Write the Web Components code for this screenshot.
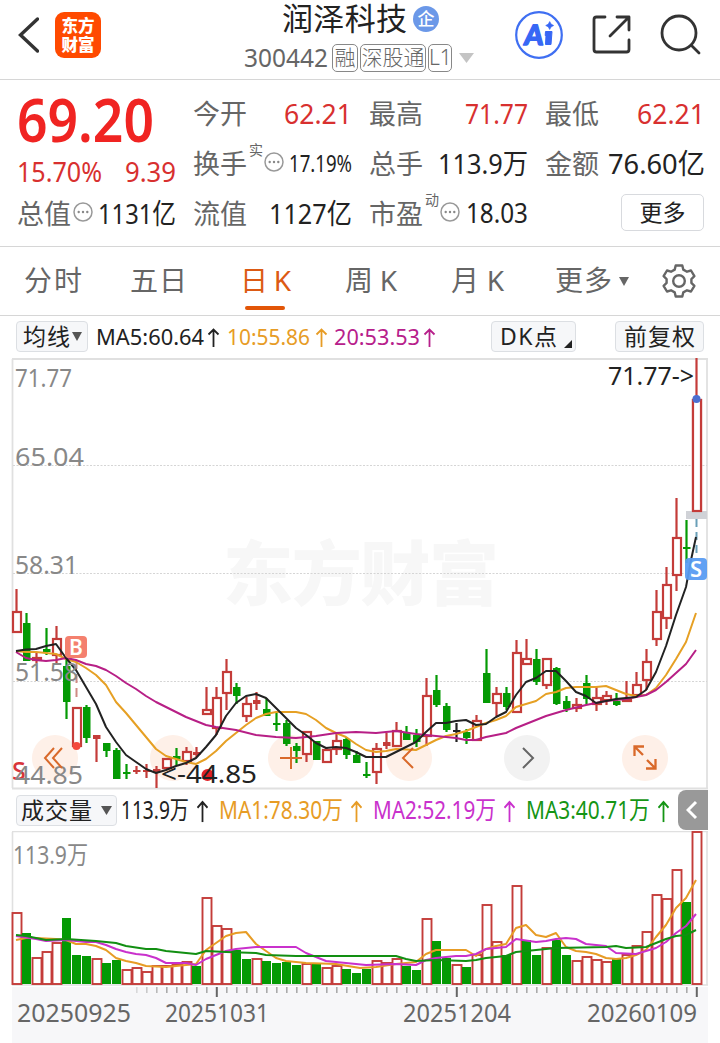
<!DOCTYPE html>
<html lang="zh-CN">
<head>
<meta charset="utf-8">
<title>润泽科技 300442</title>
<style>
  body {
    margin: 0;
    width: 720px;
    height: 1043px;
    overflow: hidden;
    background: #fff;
    color: #222;
    font-family: "Noto Sans", "Noto Sans CJK SC", sans-serif;
  }
</style>
</head>
<body>
<stock-page></stock-page>

<script>
function define(name, html, setup) {
  const template = document.createElement('template');
  template.innerHTML = html;
  customElements.define(name, class extends HTMLElement {
    constructor() {
      super();
      this.attachShadow({ mode: 'open' });
      this.shadowRoot.appendChild(template.content.cloneNode(true));
    }

    connectedCallback() {
      if (setup && !this.ready) {
        this.ready = true;
        setup.call(this, this.shadowRoot);
      }
    }
  });
}

// text set to the width in its "w" attribute: tracked out when short, condensed when long
define('fit-text', `
  <style>
    :host { display: inline-block; white-space: nowrap; flex: none; }
    span { display: inline-block; transform-origin: 0 50%; }
  </style>
  <span><slot></slot></span>
`, function (root) {
  const span = root.querySelector('span');
  const w = Number(this.getAttribute('w'));
  const natural = span.getBoundingClientRect().width;
  const gaps = this.textContent.length - 1;
  this.style.width = w + 'px';
  if (natural > w) {
    span.style.transform = `scaleX(${w / natural})`;
  } else if (gaps > 0) {
    span.style.letterSpacing = (w - natural) / gaps + 'px';
  }
});

define('info-dot', `
  <style>
    :host { display: block; width: 20px; height: 20px; flex: none; }
    svg { display: block; }
  </style>
  <svg width="20" height="20" viewBox="0 0 20 20">
    <circle cx="10" cy="10" r="9" fill="none" stroke="#999" stroke-width="1.5"/>
    <g fill="#888"><circle cx="5.7" cy="10" r="1.2"/><circle cx="10" cy="10" r="1.2"/><circle cx="14.3" cy="10" r="1.2"/></g>
  </svg>
`);

define('up-arrow', `
  <style>
    :host { display: block; width: 13px; height: 19px; flex: none; }
    svg { display: block; }
  </style>
  <svg width="13" height="19" viewBox="0 0 13 19" fill="none" stroke="currentColor" stroke-width="1.8">
    <path d="M6.5 19V1.5M1.5 6.5l5-5 5 5"/>
  </svg>
`);

define('soft-chip', `
  <style>
    :host {
      display: flex;
      align-items: center;
      box-sizing: border-box;
      height: 31px;
      border: 1px solid #dcdfe3;
      border-radius: 4px;
      background: #f6f7f9;
      font-size: 23px;
      flex: none;
      line-height: 29px;
    }
  </style>
  <slot></slot>
`);

define('app-header', `
  <style>
    :host { display: flex; height: 79px; border-bottom: 1px solid #d6d6d6; }
    svg { display: block; flex: none; }
    .back { margin: 15px 0 0 17px; }
    .logo {
      width: 46px; height: 46px; margin: 12px 0 0 16px; box-sizing: border-box; padding-top: 4px;
      border-radius: 9px; background: #ff4a00; color: #fff;
      font-size: 16.5px; font-weight: 900; line-height: 19px; text-align: center; flex: none;
    }
    .middle { width: 240px; margin-left: 142px; }
    .title { display: flex; height: 40px; padding-left: 39px; line-height: 37px; font-size: 31px; }
    .title b {
      width: 26px; height: 26px; margin: 6px 0 0 6px; border-radius: 50%; background: #6b98e8;
      color: #fff; font-size: 17px; font-weight: 500; line-height: 25px; text-align: center;
    }
    .code { display: flex; height: 36px; padding-left: 1px; color: #666; font-size: 25px; line-height: 34px; }
    .tag {
      box-sizing: border-box; height: 28px; margin: 4px 2px 0 0; border: 1.5px solid #888; border-radius: 5px;
      font-size: 21px; line-height: 24px; text-align: center; flex: none; font-weight: 300;
    }
    .code .num { margin-right: 4px; }
    .drop { margin: 13px 0 0 5px; }
    .ai { margin: 11px 0 0 32px; }
    .share { margin: 14px 0 0 27px; }
    .search { margin: 14px 0 0 27px; }
  </style>
  <svg class="back" width="22" height="40" fill="none" stroke="#333" stroke-width="3.4" stroke-linecap="round"><path d="M20.5 4L3.500 20 20.500 36"/></svg>
  <div class="logo">东方<br>财富</div>
  <div class="middle">
    <div class="title"><fit-text w="125">润泽科技</fit-text><b>企</b></div>
    <div class="code">
      <fit-text class="num" w="84">300442</fit-text>
      <span class="tag" style="width:26px">融</span>
      <span class="tag" style="width:66px">深股通</span>
      <span class="tag" style="width:24px">L1</span>
      <svg class="drop" width="15" height="10"><path d="M0 0h15L7.500 10z" fill="#c4c4c4"/></svg>
    </div>
  </div>
  <svg class="ai" width="48" height="48" viewBox="0 0 48 48">
    <circle cx="24" cy="24" r="22.8" fill="#fff" stroke="#3f6ff2" stroke-width="2.2"/>
    <text transform="translate(8.500 33.500) skewX(-6)" font-family="Lato, sans-serif" font-size="28" font-weight="900" fill="#3767f5" stroke="#3767f5" stroke-width="1.4" stroke-linejoin="round" textLength="19" lengthAdjust="spacingAndGlyphs">A</text>
    <path d="M30.500 20.500H37L36 33.500H30.500L31 24.500H30.200z" fill="#3767f5" stroke="#3767f5" stroke-linejoin="round"/>
    <path d="M34.700 10.500q.8 3.200 4 4-3.200.8-4 4-.8-3.200-4-4 3.200-.8 4-4z" fill="#3767f5" stroke="#3767f5" stroke-width=".6"/>
  </svg>
  <svg class="share" width="42" height="42" fill="none" stroke="#333" stroke-width="2.800" stroke-linecap="round" stroke-linejoin="round">
    <path d="M15 3H6.500Q4 3 4 5.500v30Q4 38 6.500 38h30q2.500 0 2.500-2.500V26M27 3h12v13M39 3L20 22"/>
  </svg>
  <svg class="search" width="44" height="44" fill="none" stroke="#333" stroke-width="2.800" stroke-linecap="round">
    <circle cx="20" cy="19" r="17"/><path d="M33 32l7 7"/>
  </svg>
`);

customElements.define('quote-item', class extends HTMLElement {
  connectedCallback() {
    if (this.shadowRoot) return;
    const get = name => this.getAttribute(name);
    const note = get('note');
    this.attachShadow({ mode: 'open' }).innerHTML = `
      <style>
        :host { display: flex; height: 50px; line-height: 50px; font-size: 28px; }
        .label { color: #666; font-size: 27px; }
        sup { width: 14px; margin-left: 2px; font-size: 14px; line-height: 22px; height: 22px; color: #666; }
        info-dot { margin: 13px 0 0 ${note ? 1 : 2}px; }
        .value { margin-left: auto; font-size: ${get('size') || 28}px; line-height: 48px; }
        :host([up]) .value { color: #d8302f; }
      </style>
      <fit-text class="label" w="54">${get('label')}</fit-text>
      ${note ? `<sup>${note}</sup>` : ''}
      ${this.hasAttribute('info') ? '<info-dot></info-dot>' : ''}
      <fit-text class="value" w="${get('w')}">${get('value')}</fit-text>`;
  }
});

define('quote-board', `
  <style>
    :host {
      display: grid; box-sizing: border-box; height: 167px; padding: 9px 15px 0 17px;
      grid-template-columns: 159px 159px 159px 160px; column-gap: 17px;
      grid-template-rows: 50px 50px 50px; border-bottom: 1px solid #d6d6d6;
    }
    .last { grid-row: 1 / 3; color: #f02422; }
    .price { height: 64px; line-height: 61px; font-size: 59px; font-weight: 600; }
    .change { display: flex; justify-content: space-between; height: 36px; line-height: 37px; font-size: 27px; color: #d8302f; }
    button {
      justify-self: end; box-sizing: border-box; width: 83px; height: 37px; margin: 5px 1px 0 0; padding: 0;
      border: 1px solid #d8dade; border-radius: 5px; background: #fff; color: #222;
      font: inherit; font-size: 23px; line-height: 33px;
    }
  </style>
  <div class="last">
    <div class="price"><fit-text w="137">69.20</fit-text></div>
    <div class="change"><fit-text w="85">15.70%</fit-text><fit-text w="51">9.39</fit-text></div>
  </div>
  <quote-item label="今开" value="62.21" w="68" up></quote-item>
  <quote-item label="最高" value="71.77" w="63" up></quote-item>
  <quote-item label="最低" value="62.21" w="68" up></quote-item>
  <quote-item label="换手" note="实" info value="17.19%" w="63" size="24"></quote-item>
  <quote-item label="总手" value="113.9万" w="90"></quote-item>
  <quote-item label="金额" value="76.60亿" w="97"></quote-item>
  <quote-item label="总值" info value="1131亿" w="78"></quote-item>
  <quote-item label="流值" value="1127亿" w="83"></quote-item>
  <quote-item label="市盈" note="动" info value="18.03" w="62" size="27"></quote-item>
  <button>更多</button>
`);

define('period-tab', `
  <style>
    :host { display: block; position: relative; height: 68px; line-height: 67px; flex: none; color: #666; }
    :host([active]) { color: #dc5a14; }
    :host([active])::after {
      content: ""; position: absolute; left: 5px; bottom: 5px; width: 40px; height: 4px;
      border-radius: 2px; background: #e25507;
    }
  </style>
  <slot></slot>
`);

define('period-tabs', `
  <style>
    :host { display: flex; height: 68px; border-bottom: 1px solid #d6d6d6; padding-left: 24px; font-size: 28px; }
    svg { display: block; flex: none; }
  </style>
  <period-tab style="width:106px"><fit-text w="58">分时</fit-text></period-tab>
  <period-tab style="width:110px"><fit-text w="57">五日</fit-text></period-tab>
  <period-tab active style="width:105px"><fit-text w="51">日K</fit-text></period-tab>
  <period-tab style="width:106px"><fit-text w="52">周K</fit-text></period-tab>
  <period-tab style="width:104px"><fit-text w="53">月K</fit-text></period-tab>
  <period-tab style="width:64px"><fit-text w="57">更多</fit-text></period-tab>
  <svg width="10" height="9" style="margin-top:30px"><path d="M0 0h10L5 9z" fill="#666"/></svg>
  <svg width="36" height="36" viewBox="-18 -18 36 36" style="margin:16px 0 0 32px" fill="none" stroke="#666" stroke-width="2.4" stroke-linejoin="round">
    <circle r="5.800"/>
    <path d="M-3.300-15.500h6.600l1 4.100 3.700 2.100 4-1.200 3.400 5.700-3 2.900v3.800l3 2.900-3.400 5.700-4-1.200-3.700 2.100-1 4.100h-6.600l-1-4.100L-8 9.300l-4 1.200-3.400-5.700 3-2.900v-3.800l-3-2.900 3.400-5.700 4 1.200 3.700-2.100z"/>
  </svg>
`);

define('ma-bar', `
  <style>
    :host { display: flex; height: 42px; padding: 5px 16px 0; box-sizing: border-box; font-size: 22px; line-height: 31px; }
    svg { display: block; flex: none; }
    span { display: flex; }
    up-arrow { margin: 7px 7px 0 3px; }
  </style>
  <soft-chip style="width:72px;padding-left:6px"><fit-text w="47">均线</fit-text><svg width="10" height="9" style="margin-left:2px"><path d="M0 0h10L5 9z" fill="#555"/></svg></soft-chip>
  <span style="margin-left:8px"><fit-text w="108">MA5:60.64</fit-text><up-arrow></up-arrow></span>
  <span style="color:#e79c25"><fit-text w="83">10:55.86</fit-text><up-arrow style="margin:7px 6px 0 5px"></up-arrow></span>
  <span style="color:#b7208b"><fit-text w="86">20:53.53</fit-text><up-arrow></up-arrow></span>
  <soft-chip style="width:85px;margin-left:48px;padding-left:8px"><fit-text w="57">DK点</fit-text><svg width="8" height="8" style="margin:14px 0 0 7px"><path d="M8 0v8H0z" fill="#222"/></svg></soft-chip>
  <soft-chip style="width:89px;margin-left:auto;padding-left:8px"><fit-text w="71">前复权</fit-text></soft-chip>
`);

define('volume-bar', `
  <style>
    :host { display: flex; height: 41px; padding: 5px 12px 0 16px; box-sizing: border-box; font-size: 25px; line-height: 29px; }
    svg { display: block; flex: none; }
    span { display: flex; }
    up-arrow { height: 22px; margin: 7px 10px 0 7px; transform: scaleY(1.15); }
    button {
      width: 30px; height: 40px; margin: -5px 0 0 auto; padding: 0 0 0 8px; border: 0;
      border-radius: 8px 0 0 8px; background: #999;
    }
  </style>
  <soft-chip style="width:101px;padding-left:4px"><fit-text w="71">成交量</fit-text><svg width="11" height="9" style="margin-left:9px"><path d="M0 0h11L5.500 9z" fill="#555"/></svg></soft-chip>
  <span style="margin-left:4px"><fit-text w="68">113.9万</fit-text><up-arrow></up-arrow></span>
  <span style="color:#e79c25"><fit-text w="124">MA1:78.30万</fit-text><up-arrow></up-arrow></span>
  <span style="color:#c931cc"><fit-text w="123">MA2:52.19万</fit-text><up-arrow></up-arrow></span>
  <span style="color:#159515"><fit-text w="124">MA3:40.71万</fit-text><up-arrow style="margin-right:0"></up-arrow></span>
  <button><svg width="12" height="20" fill="none" stroke="#fff" stroke-width="3"><path d="M10 2L2 10l8 8"/></svg></button>
`);

const RED = '#c43c39';
const GREEN = '#049a04';
const columnX = i => 16.5 + 10 * i;
const polyline = (points, color) =>
  `<polyline points="${points}" fill="none" stroke="${color}" stroke-width="2" stroke-linejoin="round"/>`;

// kind, high, body top, body bottom, low (r = hollow, f = filled red, g = green, k = flat)
const CANDLES = `r589,611,633,633 g613,623,661,661 r653,657,661,663 g628,649,652,655 r626,638,656,665
g658,666,702,719 r707,707,747,747 g705,707,738,743 f735,735,739,762 g743,743,751,757
g748,750,779,779 g764,772,774,779 f766,770,772,774 f764,770,772,778 f766,769,772,788
r758,758,769,769 g748,756,759,765 r747,751,762,765 f747,752,755,757 r687,709,715,715
r687,697,729,735 r659,671,694,710 g683,687,696,704 r697,703,717,722 f692,700,704,710
g698,709,716,716 g712,723,725,731 g720,723,744,746 g743,746,751,763 r731,731,755,762
g741,741,760,760 r747,749,763,763 r733,740,750,755 g737,739,755,759 g751,755,763,763
g762,774,776,778 r743,748,773,784 f733,742,746,749 r722,730,747,747 g726,733,740,740
g729,735,742,747 r678,695,737,746 g675,690,705,707 g703,706,730,732 k723,730,732,742
g729,732,738,744 r715,720,741,741 g649,673,703,703 r687,693,704,716 g687,693,707,710
r640,652,713,713 r639,658,665,665 g649,659,682,685 r658,658,686,689 g667,668,704,705
g696,701,709,712 r698,704,709,712 g675,683,699,704 r687,697,705,711 r691,695,701,705
g693,701,705,706 r681,699,702,702 r672,684,696,698 r649,661,681,690 r590,611,640,646
r567,584,619,629 r498,537,576,591 g520,547,549,563 r358,399,512,512`.split(/\s+/);

const MA5 = '16,651 26,649.5 36,649 46,646 56,644 66,658 76,670 86,687 96,704 106,727 116,742 126,755 136,762 146,769 156,773 166,770 176,766 186,763 196,758 206,747 216,735 226,716 236,703 246,696 256,694 266,698 276,708 286,718 296,728 306,735 316,743 326,748 336,747 346,748 356,752 366,757 386,757 396,752 406,747 416,742 426,732 436,723 446,723 456,721 466,720 476,725 486,724 496,717 506,712 516,695 526,682 536,678 546,671 556,671 566,681 576,692 586,696 596,703 606,701 616,699 626,698 636,697 646,690 656,672 666,646 676,615 686,587 691,560 696,537';
const MA10 = '16,651 26,652 36,652 56,654 66,659 76,662 86,668 96,675 106,685 116,702 126,713 136,725 146,737 156,749 166,756 176,759 186,762 196,764 206,759 216,751 226,741 236,733 246,725 256,718 266,714 276,712 296,712 306,714 316,720 326,728 336,733 346,737 356,744 366,750 376,752 386,751 396,749 416,750 426,745 436,740 446,736 456,734 466,731 476,727 486,723 496,720 506,716 516,707 526,704 536,701 546,694 556,692 566,688 576,687 596,687 606,686 616,690 626,694 636,696 646,695 656,688 666,675 676,659 686,642 696,613';
const MA20 = '16,652 26,658 36,660 46,661 56,660 66,658 76,660 86,664 96,666 106,670 116,676 126,683 136,689 146,696 156,702 166,707 176,712 186,717 196,721 206,725 216,727 236,730 256,735 276,737 296,738 316,736 336,733 356,732 376,733 396,731 416,734 436,736 456,738 466,740 476,740 486,737 506,733 516,728 526,724 546,716 566,710 586,705 606,701 626,699 646,695 656,690 666,682 676,673 686,664 696,650';

function drawCandle(item, i) {
  const [high, top, bottom, low] = item.slice(1).split(',').map(Number);
  const kind = item[0];
  const x = columnX(i);
  const color = { r: RED, f: RED, g: GREEN, k: '#222' }[kind];
  const wicks = `<path d="M${x} ${high}V${top}M${x} ${bottom}V${low}" stroke="${color}" stroke-width="2.2"/>`;
  if (kind === 'r') {
    return wicks + `<rect x="${x - 3.5}" y="${top + 1}" width="8" height="${Math.max(bottom - top - 2, 1)}" fill="#fff" stroke="${color}" stroke-width="2.2"/>`;
  }
  return wicks + `<rect x="${x - 3.5}" y="${top}" width="7.5" height="${bottom - top}" fill="${color}"/>`;
}

customElements.define('candle-chart', class extends HTMLElement {
  connectedCallback() {
    if (this.shadowRoot) return;
    const label = (text, y, w) => `<text x="15" y="${y}" textLength="${w}" lengthAdjust="spacingAndGlyphs" fill="#888">${text}</text>`;
    const disc = (x, fill = '#fef0e8') => `<circle cx="${x}" cy="758" r="23" fill="${fill}"/>`;
    this.attachShadow({ mode: 'open' }).innerHTML = `
      <style>
        :host { display: block; height: 432px; }
        svg { display: block; }
        text { font-size: 26px; }
      </style>
      <svg width="720" height="432" viewBox="0 358 720 432">
        <path d="M12.500 359V788M707 359V788M12 359H708M12 788.500H708" fill="none" stroke="#e0e0e0" stroke-width="1.8"/>
        <text x="223" y="600" textLength="276" style="font-size:70px;font-weight:900" fill="#f7f7f7">东方财富</text>
        <path d="M13 465.500H707M13 573.500H707M13 681.500H707" stroke="#d5d5d5" stroke-dasharray="2 1.5"/>
        ${disc(55)}${disc(173)}${disc(291)}${disc(409)}${disc(527, '#f2f2f2')}${disc(645)}
        <text x="12" y="780" style="font-size:25px;font-weight:500" fill="#d9343a">S</text>
        ${CANDLES.map(drawCandle).join('')}
        <path d="M76.500 660V699" stroke="#cf8a84" stroke-width="2" stroke-dasharray="9 5"/>
        <circle cx="76.500" cy="746" r="4" fill="#f4493d"/>
        <rect x="686" y="511" width="21" height="8" fill="#d0d2d7"/>
        <rect x="693" y="400" width="8" height="111" fill="#fff" stroke="${RED}" stroke-width="2.2"/>
        <circle cx="696.500" cy="399" r="4" fill="#4b6fd0"/>
        <path d="M696.500 519V558" stroke="#6a9fb8" stroke-width="2" stroke-dasharray="8 5"/>
        ${polyline(MA10, '#e6a024')}
        ${polyline(MA20, '#b71f86')}
        ${polyline(MA5, '#222')}
        ${label('71.77', 387, 57)}
        ${label('65.04', 466, 69)}
        ${label('58.31', 574, 63)}
        ${label('51.58', 681, 63)}
        ${label('44.85', 784, 68)}
        <g stroke="#d9692a" stroke-width="2" fill="none">
          <path d="M54 748L45 758l9 10M62 748L53 758l9 10M280 758h22M291 747v22M413 748l-10 10 10 10"/>
          <path d="M643 755l-8-8M634.500 756v-9.500h9.500M647 760l8 8M655.500 759v9.500H646" stroke-width="2.300"/>
        </g>
        <path d="M523 748l10 10-10 10" fill="none" stroke="#666" stroke-width="2"/>
        <text x="608" y="385" textLength="86" lengthAdjust="spacingAndGlyphs" fill="#222">71.77-&gt;</text>
        <circle cx="207.500" cy="775" r="6" fill="#e01f24"/>
        <text x="161" y="783" textLength="96" lengthAdjust="spacingAndGlyphs" fill="#222">&lt;-44.85</text>
        <rect x="65" y="636" width="22" height="22" rx="4" fill="#f4806e"/>
        <text x="76" y="654.500" text-anchor="middle" style="font-size:21px;font-weight:600" fill="#fff">B</text>
        <rect x="685" y="558" width="22" height="22" rx="4" fill="#5a9cf2" fill-opacity=".95"/>
        <text x="696" y="577" text-anchor="middle" style="font-size:22px;font-weight:600" fill="#fff">S</text>
      </svg>`;
  }
});

// column tops, r = hollow red, g = green
const VOLUMES = `r912 g933 r957 r951 r942 g918 g955 g956 r958 g963 g960 r969 r967 r971 r965 r965 r964 r961 g966 r897
r925 r928 g950 g959 r958 g961 g963 g962 g965 r963 g964 r967 r965 g969 g973 g969 r960 r962 r958 g966
g970 r918 g941 g958 r964 g967 r954 r904 r941 g955 r885 g940 g955 r947 g940 g955 r960 r956 r959 r961
g959 r954 r945 r931 r894 r898 r869 g902 r831`.split(/\s+/);

const VOL_MA1 = '16,940 26,938 36,938 56,939 66,940 76,944 86,944 96,946 106,950 116,958 126,961 136,963 146,966 166,967 186,965 196,964 206,950 216,943 226,936 236,933 246,932 256,944 266,951 276,958 286,961 306,963 336,964 360,968 376,967 396,964 406,963 416,962 426,954 436,950 466,950 476,956 486,949 496,946 506,944 516,928 526,925 536,935 546,937 556,933 566,947 576,951 586,952 596,954 606,958 616,959 626,958 636,955 646,950 656,937 666,925 676,908 686,898 696,880';
const VOL_MA2 = '16,936 36,939 46,941 66,940 86,942 96,942 106,945 116,949 126,952 136,954 146,955 156,958 166,963 186,963 196,965 206,959 226,951 236,949 256,947 296,947 306,953 326,961 346,963 366,965 396,964 416,965 426,960 436,958 456,956 466,956 476,954 486,949 506,947 516,939 536,942 546,941 556,939 566,938 576,939 586,944 606,946 616,953 636,954 656,948 666,942 676,933 686,926 696,914';
const VOL_MA3 = '16,935 26,936 46,940 66,939 96,941 116,943 126,946 146,949 156,949 166,951 196,954 206,951 226,952 256,953 266,955 296,956 396,956 406,959 416,961 436,960 466,961 476,960 486,958 506,956 516,952 546,949 556,948 606,947 616,946 626,948 646,947 656,943 666,939 676,936 686,935 696,930';

customElements.define('volume-chart', class extends HTMLElement {
  connectedCallback() {
    if (this.shadowRoot) return;
    const bars = VOLUMES.map((item, i) => {
      const top = Number(item.slice(1));
      const x = columnX(i);
      return item[0] === 'r'
        ? `<rect x="${x - 4}" y="${top + 1}" width="9" height="${983 - top}" fill="#fff" stroke="${RED}" stroke-width="1.9"/>`
        : `<rect x="${x - 4.5}" y="${top}" width="9" height="${984 - top}" fill="${GREEN}"/>`;
    }).join('');
    this.attachShadow({ mode: 'open' }).innerHTML = `
      <style>
        :host { display: block; height: 156px; }
        svg { display: block; }
      </style>
      <svg width="720" height="156" viewBox="0 831 720 156">
        <path d="M12.500 832V985M707 832V985M12 831.500H708M12 985H708" fill="none" stroke="#e0e0e0" stroke-width="1.6"/>
        <text x="13" y="864" textLength="75" lengthAdjust="spacingAndGlyphs" font-size="25" fill="#888">113.9万</text>
        ${bars}
        ${polyline(VOL_MA1, '#e79c25')}
        ${polyline(VOL_MA2, '#c931cc')}
        ${polyline(VOL_MA3, '#128f12')}
      </svg>`;
  }
});

define('date-axis', `
  <style>
    :host { display: block; box-sizing: border-box; width: 696px; height: 56px; margin-left: 12px; background: #f7f7f9; }
    svg { display: block; }
    div { display: flex; padding-left: 5px; font-size: 25px; line-height: 29px; color: #666; }
  </style>
  <svg width="696" height="11" viewBox="12 987 696 11"></svg>
  <div>
    <fit-text w="114">20250925</fit-text>
    <fit-text w="104" style="margin-left:34px">20251031</fit-text>
    <fit-text w="108" style="margin-left:134px">20251204</fit-text>
    <fit-text w="110" style="margin-left:76px">20260109</fit-text>
  </div>
`, function (root) {
  let ticks = '';
  for (let i = 12; i <= 68; i++) {
    const major = i % 24 === 20;
    ticks += `<path d="M${columnX(i) + .3} 987v${major ? 10 : 6}" stroke="${major ? '#666' : '#aaa'}" stroke-width="${major ? 2 : 1.6}" opacity="${Math.min(1, (i - 10) / 5)}"/>`;
  }
  root.querySelector('svg').innerHTML = ticks;
});

define('stock-page', `
  <style>
    :host { display: flex; flex-direction: column; width: 720px; height: 1043px; background: #fff; }
    :host > * { flex: none; }
  </style>
  <app-header></app-header>
  <quote-board></quote-board>
  <period-tabs></period-tabs>
  <ma-bar></ma-bar>
  <candle-chart></candle-chart>
  <volume-bar></volume-bar>
  <volume-chart></volume-chart>
  <date-axis></date-axis>
`);
</script>
</body>
</html>
